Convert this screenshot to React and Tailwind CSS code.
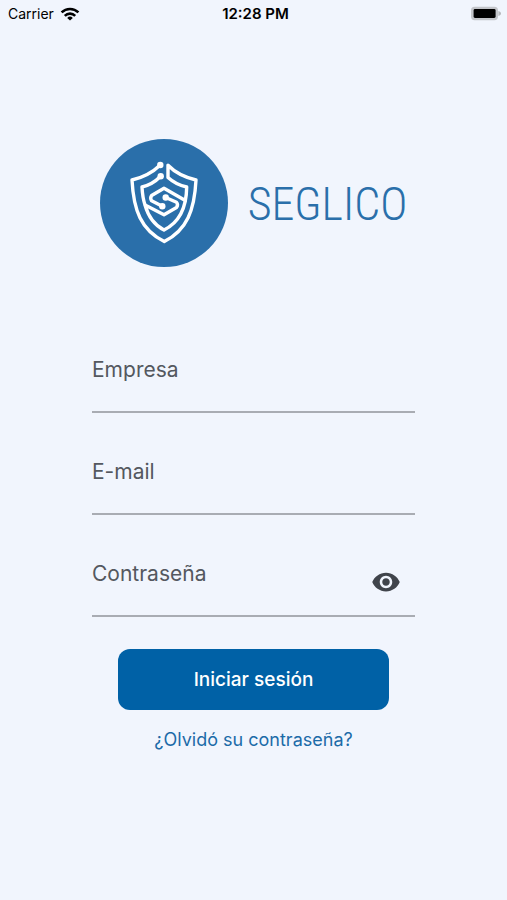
import React, { useState } from 'react';
import { MdVisibility, MdVisibilityOff } from 'react-icons/md';

const StatusBar = () => (
  <header className="grid grid-cols-3 items-center h-7 pl-2 pr-1 text-sm text-black">
    <div className="flex items-center gap-1.5">
      <span>Carrier</span>
      <svg width="20" height="14" viewBox="0 0 20 14" aria-hidden="true">
        <g fill="none" stroke="#000" strokeWidth="2.6">
          <path d="M1.6 5.4a12 12 0 0 1 16.8 0" />
          <path d="M4.8 8.8a7.4 7.4 0 0 1 10.4 0" />
        </g>
        <path d="M10 13.6 7.2 10.9a4 4 0 0 1 5.6 0z" />
      </svg>
    </div>
    <span className="text-center text-[15px] font-semibold whitespace-nowrap">
      12:28 PM
    </span>
    <svg
      className="justify-self-end"
      width="32"
      height="16"
      viewBox="0 0 32 16"
      aria-hidden="true"
    >
      <rect x="0" y="0.8" width="27" height="13.4" rx="3.6" fill="#c3c5ca" />
      <rect x="2.6" y="3.1" width="22" height="8.8" rx="1.4" fill="#000" />
      <path d="M27.4 4.9c1.600.6 2.600 1.400 2.600 2.600s-1 2-2.600 2.600z" fill="#b5b7bb" />
    </svg>
  </header>
);

const Logo = () => (
  <div className="flex items-center justify-center gap-5">
    <svg width="128" height="128" viewBox="0 0 128 128" aria-hidden="true">
      <circle cx="64" cy="64" r="64" fill="#2a6faa" />
      <g
        fill="none"
        stroke="#fff"
        strokeWidth="3.4"
        strokeLinecap="round"
        strokeLinejoin="round"
      >
        <path d="M60.3 26C53 33 43 38.5 32 41C33.5 71 41 91 64.3 102.5C87 91 94.5 71 96 41C85 38.5 75.500 34 68 26.3V38.5C73 43 79.5 46.5 86.7 48C86.5 68 80 83 64 91C53 85.5 48 76.5 45 66C43 60 42.3 54 42 48C49 46.5 55 43 60.7 37.3" />
        <path d="M85.3 61.5 64 49.3 51.6 56.5Q49.8 59 51.6 61.8L62.3 67.3" />
        <path d="M65.7 58.5 76.5 63.3Q78.5 65.8 76.5 68.5L64 75.7 45.5 66.3" />
      </g>
      <g fill="#fff">
        <circle cx="60.3" cy="26" r="3.2" />
        <circle cx="60.7" cy="37.3" r="3.2" />
        <circle cx="62.3" cy="67.3" r="3.2" />
        <circle cx="65.7" cy="58.5" r="3.2" />
      </g>
    </svg>
    <h1 className="pt-0.5 font-['Roboto_Condensed',Roboto,sans-serif] font-light text-[46px] leading-none text-[#2a6faa]">
      SEGLICO
    </h1>
  </div>
);

const Field = ({ id, label, type = 'text', children }) => (
  <div className="flex items-center border-b-2 border-[#a9acb3]">
    <div className="flex flex-col flex-1 min-w-0">
      <label htmlFor={id} className="text-[21px] leading-[30px] text-[#54585f]">
        {label}
      </label>
      <input
        id={id}
        name={id}
        type={type}
        className="w-full h-[26px] bg-transparent text-lg text-[#40444b] outline-none"
      />
    </div>
    {children}
  </div>
);

const App = () => {
  const [showPassword, setShowPassword] = useState(false);
  const Eye = showPassword ? MdVisibilityOff : MdVisibility;

  return (
    <div className="min-h-screen bg-[#f1f5fd] font-[Inter,sans-serif]">
      <StatusBar />

      <main className="pt-[111px] pb-10">
        <Logo />

        <form
          className="flex flex-col px-[92px] pt-[88px]"
          onSubmit={(e) => e.preventDefault()}
        >
          <div className="flex flex-col gap-11">
            <Field id="company" label="Empresa" />
            <Field id="email" label="E-mail" type="email" />
            <Field
              id="password"
              label="Contraseña"
              type={showPassword ? 'text' : 'password'}
            >
              <button
                type="button"
                aria-label="Mostrar contraseña"
                className="px-3.5 pb-2.5 text-[#40444b]"
                onClick={() => setShowPassword(!showPassword)}
              >
                <Eye size={30} />
              </button>
            </Field>
          </div>

          <button
            type="submit"
            className="mt-8 mx-[26px] py-4 rounded-xl bg-[#0061a6] text-[19px] leading-[29px] font-medium text-white"
          >
            Iniciar sesión
          </button>
          <a
            href="#recuperar"
            className="mt-4 self-center text-lg leading-7 text-[#1c6ba8]"
          >
            ¿Olvidó su contraseña?
          </a>
        </form>
      </main>
    </div>
  );
};

export default App;
